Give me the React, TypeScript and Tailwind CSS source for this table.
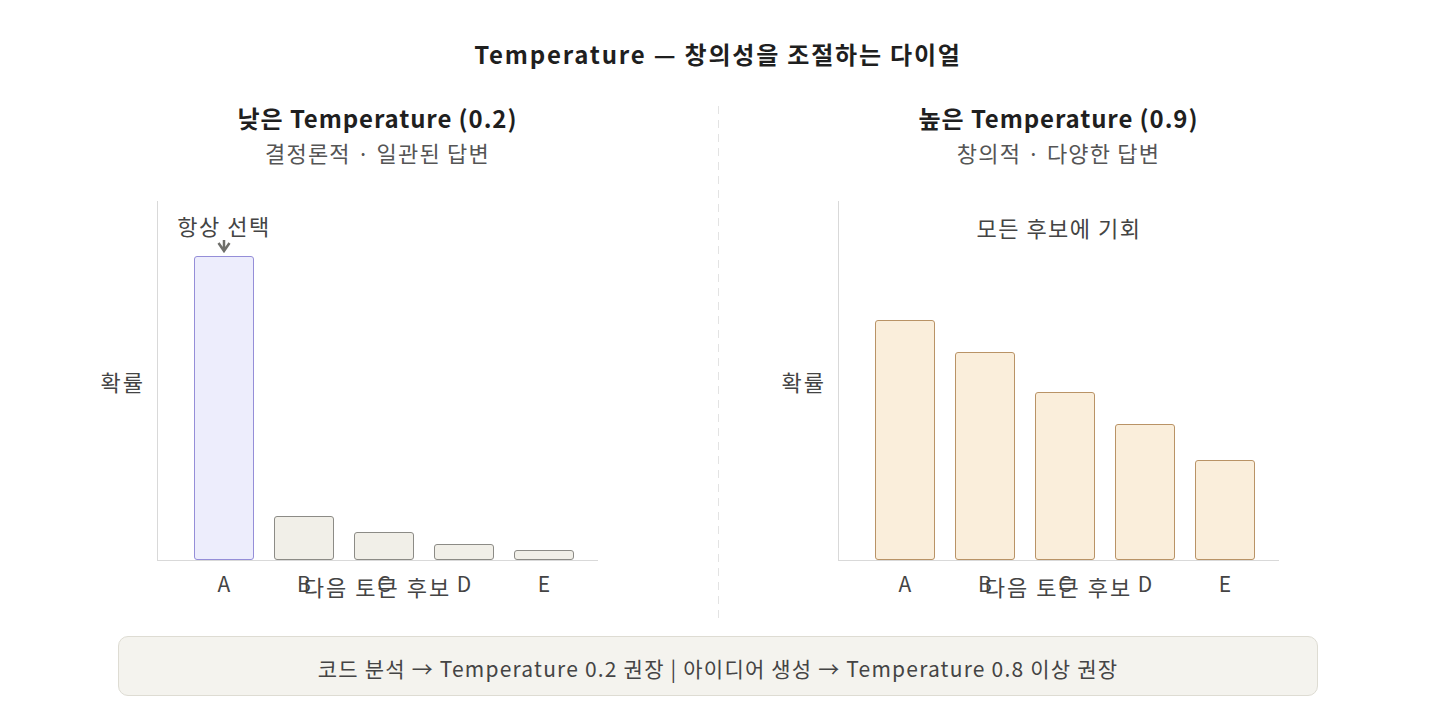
import clsx from 'clsx';

type Bar = { label: string; height: number };

const LOW: Bar[] = [
  { label: 'A', height: 304 },
  { label: 'B', height: 44 },
  { label: 'C', height: 28 },
  { label: 'D', height: 16 },
  { label: 'E', height: 10 },
];

const HIGH: Bar[] = [
  { label: 'A', height: 240 },
  { label: 'B', height: 208 },
  { label: 'C', height: 168 },
  { label: 'D', height: 136 },
  { label: 'E', height: 100 },
];

function Chart({ bars, variant }: { bars: Bar[]; variant: 'low' | 'high' }) {
  return (
    <div className="mx-auto w-[441px]">
      <div className="relative h-[360px] border-l border-b border-[#d9d9d9] flex items-end gap-[20px] pl-[36px]">
        <span className="absolute right-full mr-[13px] top-1/2 -translate-y-1/2 text-[22px] tracking-[2px] text-[#444] whitespace-nowrap">
          확률
        </span>
        {variant === 'high' && (
          <span className="absolute top-[12px] left-0 right-0 text-center text-[22px] leading-[28px] tracking-[1.5px] text-[#444]">
            모든 후보에 기회
          </span>
        )}
        {bars.map((b, i) => (
          <div key={b.label} className="w-[60px] flex flex-col items-center">
            {variant === 'low' && i === 0 && (
              <>
                <span className="text-[22px] leading-[28px] tracking-[1.5px] text-[#444] whitespace-nowrap">항상 선택</span>
                <svg width="14" height="13" viewBox="0 0 14 13" className="mt-[1px] mb-[3px]">
                  <path d="M7 0 V10 M1.5 3 L7 11 L12.5 3" fill="none" stroke="#6f6f6a" strokeWidth="2.5" />
                </svg>
              </>
            )}
            <div
              className={clsx(
                'w-[60px] rounded-[3px] border',
                variant === 'high'
                  ? 'bg-[#faeedb] border-[#b99366]'
                  : i === 0
                    ? 'bg-[#ededfc] border-[#958ed8]'
                    : 'bg-[#f1efe8] border-[#8c8b86]',
              )}
              style={{ height: b.height }}
            />
          </div>
        ))}
      </div>
      <div className="relative mt-[10px] flex gap-[20px] pl-[37px] text-[21px] leading-[24px] text-[#444]">
        {bars.map((b) => (
          <span key={b.label} className="w-[60px] text-center">{b.label}</span>
        ))}
        <span className="absolute left-0 right-0 top-[3px] text-center text-[22px] tracking-[2px]">다음 토큰 후보</span>
      </div>
    </div>
  );
}

function Panel({ title, subtitle, bars, variant }: { title: string; subtitle: string; bars: Bar[]; variant: 'low' | 'high' }) {
  return (
    <div className="w-[680px] flex flex-col items-stretch pb-[24px]">
      <h2 className="text-center text-[24px] leading-[30px] tracking-[0.9px] font-bold text-[#1f1f1f]">{title}</h2>
      <p className="mt-[6px] text-center text-[22px] leading-[26px] tracking-[1.2px] text-[#555]">{subtitle}</p>
      <div className="mt-[36px]">
        <Chart bars={bars} variant={variant} />
      </div>
    </div>
  );
}

export default function App() {
  return (
    <div
      className="w-[1436px] h-[720px] bg-white flex flex-col items-center pt-[38px]"
      style={{ fontFamily: '"Noto Sans CJK KR", "Noto Sans", sans-serif' }}
    >
      <h1 className="text-[24px] leading-[32px] tracking-[1.8px] font-bold text-[#1f1f1f]">Temperature — 창의성을 조절하는 다이얼</h1>

      <div className="mt-[33px] flex">
        <Panel title="낮은 Temperature (0.2)" subtitle="결정론적 · 일관된 답변" bars={LOW} variant="low" />
        <div className="mt-[3px] w-px bg-[repeating-linear-gradient(to_bottom,#e3e3e3_0_8px,transparent_8px_14px)]" />
        <Panel title="높은 Temperature (0.9)" subtitle="창의적 · 다양한 답변" bars={HIGH} variant="high" />
      </div>

      <div className="mt-[17px] w-[1200px] h-[60px] pt-[5px] rounded-[10px] border border-[#dedcd3] bg-[#f4f3ee] flex items-center justify-center">
        <span className="text-[21px] tracking-[1.2px] text-[#444]">
          코드 분석 → Temperature 0.2 권장 | 아이디어 생성 → Temperature 0.8 이상 권장
        </span>
      </div>
    </div>
  );
}
